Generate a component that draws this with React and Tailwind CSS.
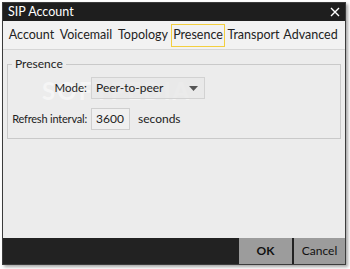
import React from 'react';

const tabs = [
  { name: 'Account', w: 'w-[51px]' },
  { name: 'Voicemail', w: 'w-[58px]' },
  { name: 'Topology', w: 'w-[56px]' },
  { name: 'Presence', w: 'w-[54px]' },
  { name: 'Transport', w: 'w-[57px]' },
  { name: 'Advanced', w: 'w-[57px]' },
];

const App = () => {
  return (
    <div className="w-[350px] h-[269px] bg-white overflow-hidden" style={{ fontFamily: 'Lato, "Open Sans", sans-serif' }}>
      <div className="ml-[2px] mt-[2px] w-[344px] h-[263px] flex flex-col border border-[#3c3c3c] shadow-[2px_2px_3px_rgba(0,0,0,0.35)]">
        <div className="h-[18px] bg-[#1e1e1e] flex items-center justify-between pl-[5px] pr-[4px]">
          <span className="text-white text-[12.5px] leading-none">SIP Account</span>
          <svg width="10" height="10" viewBox="0 0 10 10" className="mr-[1px]">
            <path d="M1 1 L9 9 M9 1 L1 9" stroke="#ffffff" strokeWidth="1.4" />
          </svg>
        </div>
        <div className="h-[28px] bg-[#f2f2f2] flex items-center pl-[3px] text-[12.5px] text-[#222] whitespace-nowrap">
          {tabs.map(t => (
            <div
              key={t.name}
              className={`${t.w} h-[23px] flex items-center justify-center leading-none ${t.name === 'Presence' ? 'border border-[#f3cf3f]' : 'border border-transparent'}`}
            >
              {t.name}
            </div>
          ))}
        </div>
        <div className="flex-1 bg-[#ececec] border-t border-[#d6d6d6] px-[4px] pt-[14px]">
          <div className="relative border border-[#c9c9c9] h-[75px] pt-[12px]">
            <span className="absolute left-[34px] top-[14px] text-[24px] font-bold tracking-[2px] text-white/50 leading-none">SOFTPEDIA</span>
            <span className="absolute -top-[9px] left-[4px] bg-[#ececec] px-[3px] text-[12px] text-[#222] leading-[16px]">Presence</span>
            <div className="relative flex items-center h-[22px]">
              <div className="w-[83px] shrink-0 flex justify-end pr-[4px]">
                <span className="text-[11.5px] text-[#222] whitespace-nowrap">Mode:</span>
              </div>
              <div className="w-[114px] h-[22px] bg-[#e9e9e9]/80 border border-[#d2d2d2] flex items-center justify-between pl-[4px] pr-[6px] text-[12px] text-[#222]">
                <span>Peer-to-peer</span>
                <svg width="9" height="5" viewBox="0 0 9 5">
                  <path d="M0 0 L9 0 L4.5 5 Z" fill="#555" />
                </svg>
              </div>
            </div>
            <div className="relative flex items-center h-[22px] mt-[9px]">
              <div className="w-[83px] shrink-0 flex justify-end pr-[4px]">
                <span className="text-[11px] tracking-[-0.2px] text-[#222] whitespace-nowrap">Refresh interval:</span>
              </div>
              <div className="w-[39px] h-[22px] bg-[#f0f0f0] border border-[#cfcfcf] flex items-center pl-[4px] text-[12px] text-[#222]">3600</div>
              <span className="ml-[8px] text-[12px] text-[#222]">seconds</span>
            </div>
          </div>
        </div>
        <div className="h-[26px] bg-[#222222] flex justify-end">
          <div className="w-[53px] bg-[#9c9c9c] flex items-center justify-center text-[12px] font-bold text-[#111]">OK</div>
          <div className="w-[2px] bg-[#222222]"></div>
          <div className="w-[51px] bg-[#9c9c9c] flex items-center justify-center text-[12px] text-[#111]">Cancel</div>
        </div>
      </div>
    </div>
  );
};

export default App;
